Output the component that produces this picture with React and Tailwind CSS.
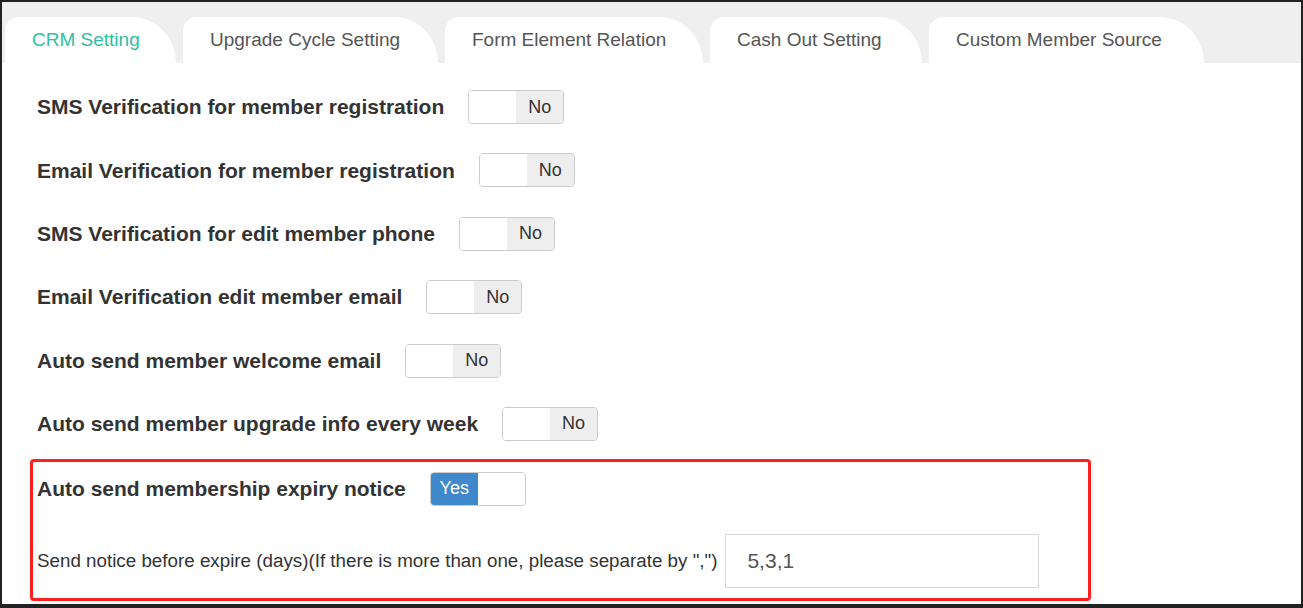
import React from 'react';

const tabs = [
  { name: 'CRM Setting', w: 'w-[171px]' },
  { name: 'Upgrade Cycle Setting', w: 'w-[255px]' },
  { name: 'Form Element Relation', w: 'w-[258px]' },
  { name: 'Cash Out Setting', w: 'w-[212px]' },
  { name: 'Custom Member Source', w: 'w-[275px]' },
];

const settings = [
  { label: 'SMS Verification for member registration', on: false },
  { label: 'Email Verification for member registration', on: false },
  { label: 'SMS Verification for edit member phone', on: false },
  { label: 'Email Verification edit member email', on: false },
  { label: 'Auto send member welcome email', on: false },
  { label: 'Auto send member upgrade info every week', on: false },
];

function Toggle({ on }) {
  return (
    <div className="ml-[24px] flex h-[34px] w-[96px] overflow-hidden rounded-[4px] border border-[#cccccc] text-[18px]">
      {on ? (
        <>
          <div className="flex w-1/2 items-center justify-center bg-[#3f88cb] text-white">Yes</div>
          <div className="w-1/2 bg-white" />
        </>
      ) : (
        <>
          <div className="w-1/2 bg-white" />
          <div className="flex w-1/2 items-center justify-center bg-[#eeeeee] text-[#333]">No</div>
        </>
      )}
    </div>
  );
}

function SettingRow({ label, on }) {
  return (
    <div className="flex h-[34px] items-center">
      <span className="text-[21px] font-bold text-[#333]">{label}</span>
      <Toggle on={on} />
    </div>
  );
}

function App() {
  return (
    <div className="h-[608px] w-[1303px] overflow-hidden border-t-2 border-r-2 border-b-4 border-l-2 border-[#222] bg-white font-['Liberation_Sans',Arial,sans-serif]">
      <div className="flex h-[61px] items-end gap-[7px] bg-[#efefef] pl-[3px]">
        {tabs.map((t, i) => (
          <div
            key={t.name}
            className={`flex h-[46px] shrink-0 items-center rounded-tl-[14px] rounded-tr-[44px_46px] bg-white pl-[27px] text-[19px] whitespace-nowrap ${t.w} ${i === 0 ? 'text-[#2fbfa2]' : 'text-[#555]'}`}
          >
            {t.name}
          </div>
        ))}
      </div>

      <div className="pt-[27px] pl-[35px]">
        <div className="flex flex-col gap-[29.4px]">
          {settings.map((s) => (
            <SettingRow key={s.label} label={s.label} on={s.on} />
          ))}
        </div>

        <div className="mt-[18px] ml-[-7px] w-[1061px] rounded-[4px] border-[3px] border-[#ff1f1f] py-[10px] pl-[4px]">
          <SettingRow label="Auto send membership expiry notice" on />
          <div className="mt-[28px] flex items-center">
            <span className="text-[18.8px] text-[#333]">Send notice before expire (days)(If there is more than one, please separate by ",")</span>
            <div className="ml-[8px] flex h-[54px] w-[314px] items-center border border-[#d6d6d6] pl-[21px] text-[21px] text-[#555]">
              5,3,1
            </div>
          </div>
        </div>
      </div>
    </div>
  );
}

export default App;
